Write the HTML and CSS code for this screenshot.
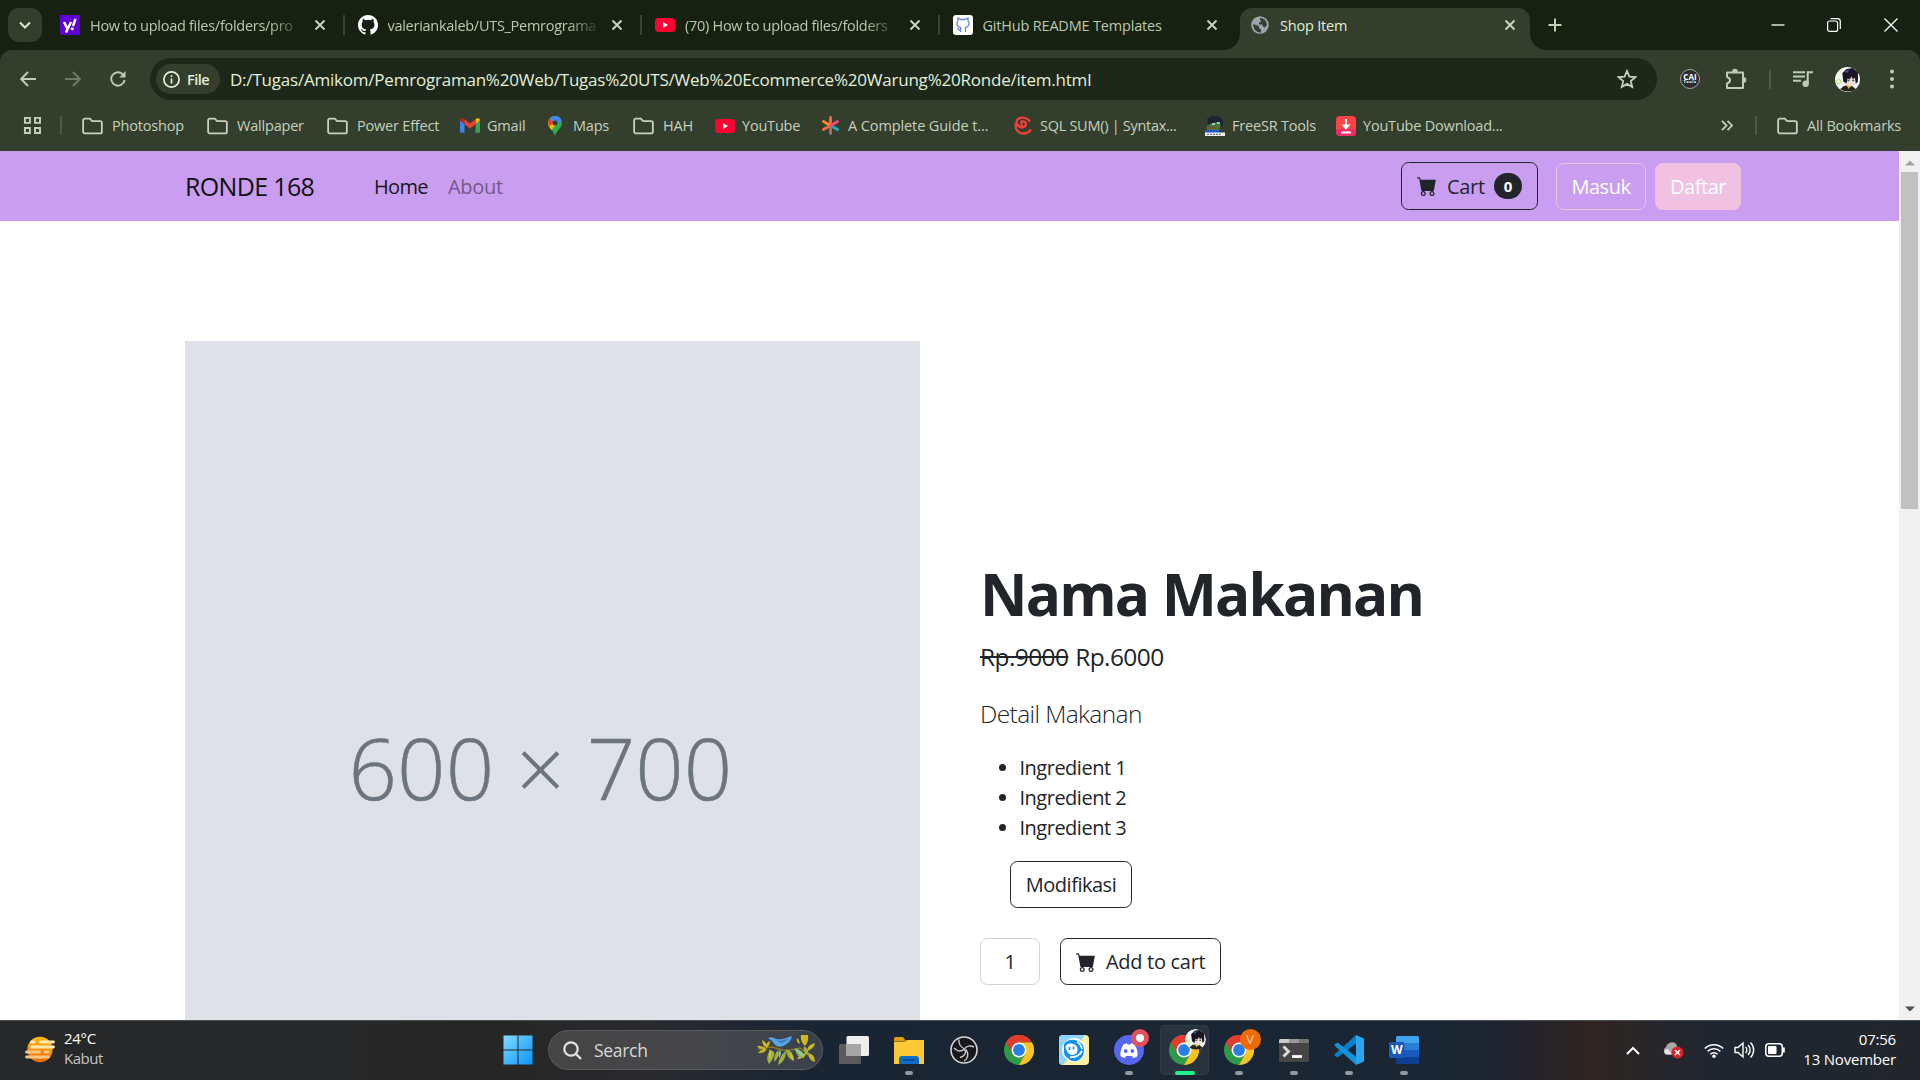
FILE: index.html
```html
<!DOCTYPE html>
<html lang="id">
<head>
<meta charset="utf-8">
<title>Shop Item</title>
<link rel="stylesheet" href="styles.css">
</head>
<body>
<svg class="defs" aria-hidden="true">
  <symbol id="close" viewBox="0 0 12 12"><path d="M1.5 1.5l9 9M10.5 1.5l-9 9" fill="none" stroke="currentColor" stroke-width="1.9"/></symbol>
  <symbol id="folder" viewBox="0 0 22 18"><path d="M1.2 14.8V3a1.8 1.8 0 0 1 1.8-1.8h5.2l2.4 2.6H19A1.8 1.8 0 0 1 20.8 5.600v9.400A1.800 1.800 0 0 1 19 16.800H3A1.800 1.800 0 0 1 1.200 15z" fill="none" stroke="currentColor" stroke-width="1.900"/></symbol>
  <symbol id="youtube" viewBox="0 0 20 14"><rect width="20" height="14" rx="3.500" fill="#ff0033"/><path d="M8 4l5 3-5 3z" fill="#fff"/></symbol>
  <symbol id="cart" viewBox="0 0 16 16"><path d="M0 1.500A.5.5 0 0 1 .5 1H2a.5.5 0 0 1 .485.379L2.890 3H14.500a.5.5 0 0 1 .491.592l-1.500 8A.5.5 0 0 1 13 12H4a.5.5 0 0 1-.491-.408L2.010 3.607 1.610 2H.5a.5.5 0 0 1-.5-.5zM5 12a2 2 0 1 0 0 4 2 2 0 0 0 0-4zm7 0a2 2 0 1 0 0 4 2 2 0 0 0 0-4zm-7 1a1 1 0 1 1 0 2 1 1 0 0 1 0-2zm7 0a1 1 0 1 1 0 2 1 1 0 0 1 0-2z" fill="currentColor"/></symbol>
  <symbol id="chrome" viewBox="0 0 30 30"><circle cx="15" cy="15" r="15" fill="#2b9b47"/><path d="M2 7.500A15 15 0 0 1 28 7.500H15z" fill="#e33b2e"/><path d="M2 7.500A15 15 0 0 1 15 0v15l-6.500 3.700z" fill="#e33b2e"/><path d="M28 7.500A15 15 0 0 1 15 30l6.500-11.300L15 7.500z" fill="#fcc31e"/><circle cx="15" cy="15" r="7.500" fill="#fff"/><circle cx="15" cy="15" r="5.900" fill="#2b7de9"/></symbol>
  <symbol id="avatar" viewBox="0 0 24 24"><circle cx="12" cy="12" r="12" fill="#f4f8f2"/><circle cx="3.500" cy="14" r="2" fill="none" stroke="#b5e388"/><path d="M5 21l4-3h7l4 3a12 12 0 0 1-15 0z" fill="#26231f"/><path d="M11 17l2 4 3-4z" fill="#e6bd37"/><path d="M11 8h9l-1 8-4 3-4-3z" fill="#f6ddd3"/><path d="M8 14L7 6l4-4 6-1 5 4v9l-2 2-1-6-2 2-1-3-2 3-2-1-1 5z" fill="#191527"/><path d="M9 4l5-2-2 4z" fill="#4f3d91"/><path d="M12 13h2M16.500 13h2" stroke="#28695c" stroke-width="1.500"/></symbol>
</svg>

<header class="browser">
  <div class="tabstrip">
    <button class="tab-search"><svg width="12" height="8" viewBox="0 0 12 8"><path d="M1 1.500l5 5 5-5" fill="none" stroke="currentColor" stroke-width="2"/></svg></button>
    <div class="tab">
      <svg class="favicon" viewBox="0 0 20 20"><path fill="#5f01d1" d="M0 0h20v20H0z"/><path d="M4 7l3.500 7M11 7l-5 10.500M15.500 4L13 11" stroke="#fff" stroke-width="2.500" fill="none"/><circle cx="12.300" cy="13.700" r="1.500" fill="#fff"/></svg>
      <span class="tab-title faded">How to upload files/folders/pro</span><svg class="tab-close"><use href="#close"/></svg>
    </div>
    <div class="tab">
      <svg class="favicon" viewBox="0 0 16 16"><path fill="#fff" d="M8 0C3.580 0 0 3.580 0 8c0 3.540 2.290 6.530 5.470 7.590.4.070.55-.17.55-.38v-1.490c-2.010.37-2.530-.49-2.690-.94-.09-.23-.48-.94-.82-1.130-.28-.15-.68-.52-.01-.53.63-.01 1.080.58 1.230.82.72 1.210 1.870.87 2.330.66.070-.52.28-.87.51-1.070-1.780-.2-3.640-.89-3.640-3.950 0-.87.31-1.590.82-2.150-.08-.2-.36-1.020.08-2.120 0 0 .67-.21 2.200.82a7.500 7.500 0 0 1 4 0c1.530-1.040 2.200-.82 2.200-.82.44 1.100.16 1.920.08 2.120.51.56.82 1.270.82 2.150 0 3.070-1.870 3.750-3.650 3.950.29.25.54.73.54 1.480v2.200c0 .21.15.46.55.38A8 8 0 0 0 8 0z"/></svg>
      <span class="tab-title faded">valeriankaleb/UTS_Pemrograma</span><svg class="tab-close"><use href="#close"/></svg>
    </div>
    <div class="tab">
      <svg class="favicon"><use href="#youtube"/></svg>
      <span class="tab-title faded">(70) How to upload files/folders</span><svg class="tab-close"><use href="#close"/></svg>
    </div>
    <div class="tab">
      <svg class="favicon" viewBox="0 0 20 20"><rect width="20" height="20" rx="3" fill="#fff"/><path d="M7.500 17v-4.500C3 11.500 3.500 7 5 6V3l3 1.500h4L15 3v3c1.500 1 2 5.500-2.500 6.500V17M7.500 15C5 15.500 5.500 13.500 4 13" fill="none" stroke="#5c83e6" stroke-width="1.300"/></svg>
      <span class="tab-title">GitHub README Templates</span><svg class="tab-close"><use href="#close"/></svg>
    </div>
    <div class="tab active">
      <svg class="favicon globe" viewBox="0 0 18 18"><circle cx="9" cy="9" r="8.800" fill="#9da2ad"/><path d="M2 8l4.500 1.500q2 .5 1.500 2.500l2 1.500v3Q3 17 2 8zM9 2q6 0 7 7l-2.500 2.500-2-1.500V8.500H8V6.500l2.500-1L9 4z" fill="#333e2d"/></svg>
      <span class="tab-title">Shop Item</span><svg class="tab-close"><use href="#close"/></svg>
    </div>
    <svg class="new-tab" viewBox="0 0 14 14"><path d="M7 .5v13M.5 7h13" stroke="currentColor" stroke-width="2"/></svg>
    <div class="window-buttons">
      <svg width="14" height="14" viewBox="0 0 14 14"><path d="M.5 7h13" stroke="#fff" stroke-width="1.300"/></svg>
      <svg width="14" height="14" viewBox="0 0 14 14"><rect x=".6" y="3" width="10" height="10.400" rx="2" fill="none" stroke="#fff" stroke-width="1.200"/><path d="M3.500 .7h7a2.800 2.800 0 0 1 2.800 2.800V11" fill="none" stroke="#fff" stroke-width="1.200"/></svg>
      <svg width="14" height="14" viewBox="0 0 14 14"><path d="M.5 .5l13 13M13.500 .5l-13 13" stroke="#fff" stroke-width="1.300"/></svg>
    </div>
  </div>

  <div class="toolbar">
    <div class="nav-icons">
      <svg viewBox="0 0 16 16"><path d="M8 1L1.200 8 8 15M1.500 8H16" fill="none" stroke="currentColor" stroke-width="1.900"/></svg>
      <svg class="dim" viewBox="0 0 16 16"><path d="M8 1l6.800 7L8 15M14.500 8H0" fill="none" stroke="currentColor" stroke-width="1.900"/></svg>
      <svg viewBox="0 0 16 16"><path d="M14.600 9A6.700 6.700 0 1 1 13 3.500l1.500 2" fill="none" stroke="currentColor" stroke-width="1.900"/><path d="M15.500 0v6.500H9.300z" fill="currentColor"/></svg>
    </div>
    <div class="omnibox">
      <span class="chip"><svg width="17" height="17" viewBox="0 0 17 17"><circle cx="8.500" cy="8.500" r="7.600" fill="none" stroke="currentColor" stroke-width="1.700"/><path d="M8.500 7.500v5M8.500 4.300v1.800" stroke="currentColor" stroke-width="1.700"/></svg>File</span>
      <span class="url">D:/Tugas/Amikom/Pemrograman%20Web/Tugas%20UTS/Web%20Ecommerce%20Warung%20Ronde/item.html</span>
      <svg class="star" viewBox="0 0 20 20"><path d="M10 2l2.400 5.600 6 .5-4.600 4 1.400 5.900L10 14.900 4.800 18l1.400-5.900-4.600-4 6-.5z" fill="none" stroke="currentColor" stroke-width="1.800"/></svg>
    </div>
    <div class="extensions">
      <span class="cai">CAI<small>Tools</small></span>
      <svg class="puzzle" width="22" height="22" viewBox="0 0 22 22"><path d="M2 4.500h16V20H2v-4.500c4-1.500 4-5 0-6.500z" fill="none" stroke="currentColor" stroke-width="2" stroke-linejoin="round"/><path d="M7 4a2.800 3.200 0 0 1 5.800 0zM18.500 9a2.800 2.900 0 0 1 0 5.800z" fill="currentColor"/></svg>
      <i class="sep"></i>
      <svg width="20" height="18" viewBox="0 0 20 18"><path d="M0 2.200h12M0 6.500h12M0 10.800h8M14.700 13V2.200H20" fill="none" stroke="currentColor" stroke-width="2.100"/><circle cx="12.700" cy="13.700" r="3.200" fill="currentColor"/></svg>
      <svg width="25" height="25"><use href="#avatar"/></svg>
      <svg class="menu" width="4" height="20" viewBox="0 0 4 20"><g fill="currentColor"><circle cx="2" cy="2.500" r="2"/><circle cx="2" cy="10" r="2"/><circle cx="2" cy="17.500" r="2"/></g></svg>
    </div>
  </div>

  <div class="bookmarks">
    <svg width="19" height="19" viewBox="0 0 19 19"><path d="M1.900 1.900h5v5h-5zM12 1.900h5v5h-5zM1.900 12h5v5h-5zM12 12h5v5h-5z" fill="none" stroke="currentColor" stroke-width="1.900"/></svg>
    <i class="sep"></i>
    <span class="bm"><svg class="fold"><use href="#folder"/></svg>Photoshop</span>
    <span class="bm"><svg class="fold"><use href="#folder"/></svg>Wallpaper</span>
    <span class="bm"><svg class="fold"><use href="#folder"/></svg>Power Effect</span>
    <span class="bm tight"><svg width="20" height="15" viewBox="0 0 20 15"><path d="M0 3v10.500c0 .8.500 1.300 1.300 1.300H4.500V5z" fill="#3f83f0"/><path d="M20 3v10.500c0 .8-.5 1.300-1.300 1.300h-3.200V5z" fill="#34a650"/><path d="M0 2.500l4.500 3.300v-4.500C2.500-.5 0 .3 0 2.500z" fill="#c5221f"/><path d="M20 2.500l-4.500 3.300v-4.500C17.500-.5 20 .3 20 2.500z" fill="#fbbc04"/><path d="M4.500 1.300L10 5.500l5.500-4.200v5L10 10.500 4.500 6.300z" fill="#ea4335"/></svg>Gmail</span>
    <span class="bm maps"><svg width="14" height="20" viewBox="0 0 14 20"><path d="M7 0a7 7 0 0 1 7 7c0 5-5 6.500-7 13-1.500-6-7-8-7-13a7 7 0 0 1 7-7z" fill="#34a853"/><path d="M0 7c0 3 2 5 3.500 7L9.500 7 3 2A7 7 0 0 0 0 7z" fill="#fbbc04"/><path d="M1.600 2.600A7 7 0 0 1 13.500 4.300L8.500 9.500 4 5.500z" fill="#4285f4"/><path d="M0 7c0-2 .7-3.400 1.600-4.400L6 6.300 1.200 10.500z" fill="#ea4335"/><circle cx="7" cy="7" r="2.500" fill="#333e2d"/></svg>Maps</span>
    <span class="bm"><svg class="fold"><use href="#folder"/></svg>HAH</span>
    <span class="bm tight"><svg width="20" height="14"><use href="#youtube"/></svg>YouTube</span>
    <span class="bm guide"><svg width="19" height="19" viewBox="0 0 19 19"><g stroke-width="2.900" stroke-linecap="round"><path d="M9.500 9.500V1.500" stroke="#ff6242"/><path d="M9.500 9.500l-7-4" stroke="#ff8a1e"/><path d="M9.500 9.500l-7 4" stroke="#f56f35"/><path d="M9.500 9.500v8" stroke="#a56c7d"/><path d="M9.500 9.500l7 4" stroke="#2ea8bd"/><path d="M9.500 9.500l7-4" stroke="#ef4b78"/></g></svg>A Complete Guide t...</span>
    <span class="bm tight sql"><svg width="19" height="19" viewBox="0 0 19 19"><path d="M7.500 11.500V5.500q4.500-.5 4.500 2.500t-5 3.500C2.500 10 1 5 4.500 2.800 9 0 14 2.500 16 5.500M2 7c-1.500 5.500 2 10.500 7.500 10.500 4 0 6-2 7.500-4" fill="none" stroke="#f0403a" stroke-width="2.300"/></svg>SQL SUM() | Syntax...</span>
    <span class="bm tight"><svg width="20" height="20" viewBox="0 0 20 20"><path d="M2 3l4-3 9 1 3 4-1 6H4z" fill="#182535"/><path d="M5 8l7-2 4 3-2 5H2v-4z" fill="#3b7c3c"/><path d="M7 8h3M12 7h3" stroke="#d9e4d2" stroke-width="1.500"/><path d="M1 12h12" stroke="#9c3d22" stroke-width="1.200"/><path d="M0 14h14v3H0z" fill="#2056d8"/><path d="M0 16.500h20V20H0z" fill="#f2f2f2"/><path d="M2 18.300h15" stroke="#555" stroke-dasharray="2 1"/></svg>FreeSR Tools</span>
    <span class="bm tight"><svg width="20" height="20" viewBox="0 0 20 20"><rect width="20" height="20" rx="4" fill="#fb4343"/><path d="M0 13h20v3a4 4 0 0 1-4 4H4a4 4 0 0 1-4-4z" fill="#f12a66"/><path d="M10 3v7M5 16.500h10" stroke="#fff" stroke-width="2"/><path d="M5.500 8.500h9L10 14z" fill="#fff"/></svg>YouTube Download...</span>
    <svg class="more" viewBox="0 0 12 11"><path d="M1 .8l4.500 4.700L1 10.200M6.500 .8L11 5.500l-4.500 4.700" fill="none" stroke="currentColor" stroke-width="1.800"/></svg>
    <i class="sep"></i>
    <span class="bm"><svg class="fold"><use href="#folder"/></svg>All Bookmarks</span>
  </div>
</header>

<div class="viewport">
  <main class="page">
    <nav class="navbar">
      <span class="brand">RONDE 168</span>
      <a class="nav-home">Home</a>
      <a class="nav-about">About</a>
      <button class="btn cart-btn"><svg class="cart"><use href="#cart"/></svg><span>Cart</span><b class="badge">0</b></button>
      <button class="btn btn-outline-pink">Masuk</button>
      <button class="btn btn-pink">Daftar</button>
    </nav>
    <section class="product">
      <div class="placeholder"><span>600 × 700</span></div>
      <div class="details">
        <h1>Nama Makanan</h1>
        <p class="price"><s>Rp.9000</s> <span>Rp.6000</span></p>
        <p class="lead">Detail Makanan</p>
        <ul><li>Ingredient 1</li><li>Ingredient 2</li><li>Ingredient 3</li></ul>
        <button class="btn modify">Modifikasi</button>
        <div class="buy">
          <span class="qty">1</span>
          <button class="btn add"><svg class="cart"><use href="#cart"/></svg><span>Add to cart</span></button>
        </div>
      </div>
    </section>
  </main>
  <div class="scrollbar">
    <svg viewBox="0 0 10 6"><path d="M0 5.500L5 .5l5 5z" fill="#a3a3a3"/></svg>
    <i class="thumb"></i>
    <svg viewBox="0 0 10 6"><path d="M0 .5l5 5 5-5z" fill="#505050"/></svg>
  </div>
</div>

<footer class="taskbar">
  <div class="weather">
    <svg width="30" height="27" viewBox="0 0 30 27"><defs><linearGradient id="sun" x2="0" y2="1"><stop stop-color="#fdbb12"/><stop offset="1" stop-color="#ef650e"/></linearGradient></defs><circle cx="15" cy="13.500" r="12.700" fill="url(#sun)"/><g stroke="#ffe9b0" stroke-width="2.800" stroke-linecap="round"><path d="M6.500 6H9M15.500 6h13M6.500 11h22"/><path stroke="#f5c87d" d="M1.500 16h13M20 16h3.500M1.500 21h22"/></g></svg>
    <div class="weather-text"><div>24°C</div><div class="muted">Kabut</div></div>
  </div>
  <div class="apps">
    <svg class="start" width="30" height="30" viewBox="0 0 30 30"><defs><linearGradient id="win" x2="1" y2="1"><stop stop-color="#7fdcff"/><stop offset="1" stop-color="#0a93fb"/></linearGradient></defs><path d="M.5.5h14v14H.5zM15.500.5h14v14h-14zM.5 15.500h14v14H.5zM15.500 15.500h14v14h-14z" fill="url(#win)"/></svg>
    <div class="search">
      <svg width="19" height="19" viewBox="0 0 19 19"><circle cx="8" cy="8" r="6.700" fill="none" stroke="#e4e4e6" stroke-width="2.200"/><path d="M12.500 12.500L18 18" stroke="#e4e4e6" stroke-width="2.400"/></svg>
      <span>Search</span>
      <svg class="bird" width="60" height="30" viewBox="0 0 60 30"><path d="M2 14l14-2 14 4 14-3 10 8" fill="none" stroke="#8a7a2a" stroke-width="1.500"/><g fill="#cdb81f"><path d="M1 11q5-1 9 3-6 1-9-3zM6 5q5 2 5 8-5-2-5-8zM14 6q0 5-4 7-1-5 4-7zM2 18q4-5 9-4-3 5-9 4zM45 0h7q1 7-3 11-5-4-4-11zM44 9q-1-5-3-6-1 5 3 6zM59 8q-1 6-8 8 0-6 8-8zM52 18q7 1 7 9-6-1-7-9zM41 24q3-6 10-6-3 6-10 6z"/></g><g fill="#9fb043"><path d="M14 15q6 1 4 6t-5 8q-4-6 1-14zM22 15q3 6-4 12 0-8 4-12zM30 16q0 10-8 14 1-9 8-14zM30 14q8 2 8 12-8-3-8-12zM39 13q9 2 9 10-8 0-9-10zM48 11q6 4 4 9-6-3-4-9z"/></g><path d="M38 14q9 2 10 9-5-4-10-9zM24 14q2 6-1 9-1-5 1-9z" fill="#83d0be"/><path d="M14 14q2 5 0 10-2-5 0-10zM34 17q4 5 3 9-3-4-3-9z" fill="#d8c339"/><path d="M12 3q4-2 8 1 6 1 10-1l6-2q-1 6-7 9-6 4-11-1-2-4-6-6z" fill="#54a7e4"/><path d="M20 5q6 2 12-2-2 5-8 5z" fill="#3a7fc0"/></svg>
    </div>
    <div class="app"><svg width="30" height="28" viewBox="0 0 30 28"><rect y="8" width="22" height="20" rx="1.500" fill="#5c5c5c"/><rect x="7.500" width="22.500" height="20" rx="1.500" fill="#eee"/><path d="M7.500 8H22v12H7.500z" fill="#a6a6a6"/></svg></div>
    <div class="app run"><svg width="30" height="27" viewBox="0 0 30 27"><path d="M0 1.500Q0 0 1.500 0H9l3 4H0z" fill="#e29a08"/><path d="M0 4.500h11L13 3h17v24H0z" fill="#fdca37"/><path d="M5 27v-5q0-3 3-3h14q3 0 3 3v5z" fill="#0f6cc4"/><path d="M9 23h12" stroke="#06478c" stroke-width="1.500"/></svg></div>
    <div class="app"><svg width="28" height="28" viewBox="0 0 28 28"><circle cx="14" cy="14" r="13" fill="#18181a" stroke="#d8d8da" stroke-width="1.600"/><path d="M9 3.500c-1 5 2 7.500 5.500 9.500 2 4 .5 7-4.500 8.500M24 11c-4-2-8-1-9.500 2C11 16 7 15 4 12M14 25c4-2 5-7 2-11.500" fill="none" stroke="#c9c9cc" stroke-width="1.400"/></svg></div>
    <div class="app"><svg width="30" height="30"><use href="#chrome"/></svg></div>
    <div class="app"><svg width="30" height="30" viewBox="0 0 30 30"><rect width="30" height="30" rx="4" fill="#fdf0a0"/><path d="M4 0h22L4 30a4 4 0 0 1-4-4V4a4 4 0 0 1 4-4z" fill="#8ed5fb"/><circle cx="15" cy="15" r="12" fill="#fff"/><path d="M5 9q4-5 11-4 9 2 9 10t-7 11q-6 1-9-3-3-1-4-5z" fill="#1590ee"/><path d="M6.500 12q1-4 6-3.500 6 1 6 6t-5.500 5.500q-5-1-6.500-8z" fill="#fff"/><path d="M10.500 12v3M14.500 11.500v3" stroke="#1590ee" stroke-width="1.700"/><path d="M11 22q8 1 12-6M18 7q4 2 5 7" fill="none" stroke="#fff" stroke-width="1.700"/></svg></div>
    <div class="app run"><svg width="30" height="30" viewBox="0 0 30 30"><circle cx="15" cy="15" r="15" fill="#5765ef"/><path d="M10 9l3-.7.7 1.200h2.600L17 8.300l3 .7c3 4 4 8 3.500 12-2 1.500-3.500 1.800-4.500 2l-1-2h-6l-1 2c-1-.2-2.500-.5-4.500-2C6 17 7 13 10 9z" fill="#fff"/><ellipse cx="11.700" cy="16" rx="1.800" ry="2" fill="#5765ef"/><ellipse cx="18.300" cy="16" rx="1.800" ry="2" fill="#5765ef"/></svg><i class="badge-dot rec"></i></div>
    <div class="app run current"><svg width="30" height="30"><use href="#chrome"/></svg><svg class="badge-dot"><use href="#avatar"/></svg></div>
    <div class="app run"><svg width="30" height="30"><use href="#chrome"/></svg><i class="badge-dot orange">V</i></div>
    <div class="app run"><svg width="30" height="23" viewBox="0 0 30 23"><rect width="30" height="23" rx="1.500" fill="#464646"/><path d="M0 4V1.500Q0 0 1.500 0H10v4z" fill="#ccc"/><path d="M10 0h10v4H10z" fill="#999"/><path d="M20 0h8.500Q30 0 30 1.500V4H20z" fill="#777"/><path d="M4.500 7.500l5 5-5 5" fill="none" stroke="#ddd" stroke-width="2.800"/><path d="M13 17.500h10" stroke="#fff" stroke-width="2.800"/></svg></div>
    <div class="app run"><svg width="30" height="30" viewBox="0 0 30 30"><path d="M22 0l8 3.500v23L22 30z" fill="#2aa5ee"/><path d="M22 0v8.500L3.500 22.500 0 20z" fill="#0a80cd"/><path d="M22 30v-8.500L3.500 7.500 0 10z" fill="#1292dd"/></svg></div>
    <div class="app run"><svg width="30" height="28" viewBox="0 0 30 28"><path d="M7 1.500Q7 0 8.500 0h20Q30 0 30 1.500V7H7z" fill="#41a5ee"/><path d="M7 7h23v7H7z" fill="#2b7cd3"/><path d="M7 14h23v7H7z" fill="#185abd"/><path d="M7 21h23v5.500q0 1.500-1.500 1.500h-20Q7 28 7 26.500z" fill="#103f91"/><rect y="6" width="15.500" height="16" rx="1.500" fill="#1b58b7"/><text x="7.700" y="18.200" text-anchor="middle" font-family="Open Sans" font-weight="700" font-size="12" fill="#fff">W</text></svg></div>
  </div>
  <div class="tray">
    <svg width="14" height="9" viewBox="0 0 14 9"><path d="M1 8l6-6 6 6" fill="none" stroke="#fff" stroke-width="2"/></svg>
    <svg class="cloud" width="21" height="18" viewBox="0 0 21 18"><path d="M4 13.500a4 4 0 0 1-1-7.500C5 0 13 0 14 5l2 8.500z" fill="#a8a8a8"/><path d="M3 13.500C0 12 1 8 5 8l4 5.500z" fill="#e5e5e5"/><circle cx="14.500" cy="11.500" r="6" fill="#d8202b"/><path d="M12 9l5 5M17 9l-5 5" stroke="#fff" stroke-width="1.600"/></svg>
    <svg class="wifi" width="20" height="15" viewBox="0 0 20 15"><g fill="none" stroke="#fff" stroke-width="1.500"><path d="M.8 5.500a13 13 0 0 1 18.400 0M3.600 8.400a9 9 0 0 1 12.800 0M6.400 11.200a5 5 0 0 1 7.200 0"/></g><circle cx="10" cy="13.200" r="1.800" fill="#fff"/></svg>
    <svg class="sound" width="21" height="18" viewBox="0 0 21 18"><g fill="none" stroke="#fff" stroke-width="1.400"><path d="M1 6.500h3l5-4.500v14l-5-4.500H1zM11.500 6a4 4 0 0 1 0 6M14 4a7 7 0 0 1 0 10M16.500 1.500a10.500 10.500 0 0 1 0 15"/></g></svg>
    <svg class="battery" width="20" height="14" viewBox="0 0 20 14"><rect x=".8" y=".8" width="16.500" height="12.400" rx="3" fill="none" stroke="#fff" stroke-width="1.500"/><rect x="3" y="3" width="8.500" height="8" rx="1" fill="#fff"/><path d="M18.800 4.500v5" stroke="#fff" stroke-width="2"/></svg>
    <div class="clock"><div>07:56</div><div>13 November</div></div>
  </div>
</footer>
</body>
</html>
```
FILE: styles.css
```css
* { box-sizing: border-box; }
body { margin: 0; width: 1920px; height: 1080px; overflow: hidden; display: flex; flex-direction: column; background: #fff; font-family: "Open Sans", "Noto Sans", sans-serif; font-size: 15px; letter-spacing: -0.3px; }
svg { display: block; flex: none; }
button { font: inherit; letter-spacing: inherit; border: 0; background: none; padding: 0; }
.defs { display: none; }

/* browser chrome */
.browser { height: 151px; flex: none; background: #172112; color: #c0cfb4; }
.tabstrip { height: 50px; display: flex; align-items: flex-start; }
.tab-search { width: 34px; height: 34px; margin: 8px 4px 0 8px; border-radius: 11px; background: #333e2d; color: #dbe8d0; display: flex; align-items: center; justify-content: center; }
.tab { position: relative; width: 297.500px; height: 42px; margin-top: 8px; padding: 0 18px 8px 14px; display: flex; align-items: center; font-size: 14.500px; letter-spacing: -0.19px; color: #b9c9ad; }
.tab:nth-of-type(n+2)::before { content: ""; position: absolute; left: -1px; top: 7px; width: 2px; height: 20px; background: #384431; }
.favicon { width: 20px; height: 20px; margin-right: 10px; }
.tab-title { white-space: nowrap; }
.faded { -webkit-mask-image: linear-gradient(90deg, #000 180px, transparent 213px); mask-image: linear-gradient(90deg, #000 180px, transparent 213px); letter-spacing: -0.28px; }
.tab-close { width: 12px; height: 12px; margin-left: auto; color: #c9d7be; }
.tab.active { margin-left: 4px; width: 290px; padding-left: 11px; padding-right: 14px; background: #333e2d; border-radius: 12px 12px 0 0; color: #e0eed6; }
.tab.active::before { left: -16px; top: auto; bottom: 0; width: 16px; height: 16px; background: radial-gradient(circle at 0 0, transparent 15.500px, #333e2d 16px); }
.tab.active::after { content: ""; position: absolute; right: -16px; bottom: 0; width: 16px; height: 16px; background: radial-gradient(circle at 100% 0, transparent 15.500px, #333e2d 16px); }
.globe { width: 18px; height: 18px; margin-right: 11px; }
.new-tab { width: 14px; height: 14px; margin: 18px 0 0 18px; color: #c0d0b4; }
.window-buttons { margin: 18px 22px 0 auto; display: flex; gap: 43px; }
.window-buttons svg:nth-child(2) { margin-left: -1px; }
.toolbar { height: 58px; background: #333e2d; border-radius: 12px 12px 0 0; display: flex; align-items: center; padding: 0 26px 0 20px; color: #bccdb0; }
.nav-icons { width: 130px; display: flex; gap: 29px; }
.nav-icons svg { width: 16px; height: 16px; }
.dim { color: #6f7b67; }
.omnibox { width: 1507px; height: 42px; border-radius: 21px; background: #1d281a; display: flex; align-items: center; padding: 0 20px 0 6px; color: #e3efd9; }
.chip { width: 64px; height: 30px; border-radius: 15px; background: #333e2d; display: flex; align-items: center; gap: 7px; padding-left: 7px; font-size: 14.500px; font-weight: 600; letter-spacing: -0.5px; }
.url { margin-left: 10px; font-size: 17px; letter-spacing: -0.215px; }
.star { width: 20px; height: 20px; margin-left: auto; color: #c6d3bc; }
.extensions { flex: 1; margin-left: 23px; display: flex; align-items: center; gap: 22px; }
.extensions .puzzle { margin-left: 3px; }
.extensions .menu { margin-left: 8px; }
.cai { width: 20px; height: 20px; border-radius: 50%; border: 1px solid #a5a5a5; background: #2c2b30; color: #fff; font-size: 8px; font-weight: 700; line-height: 7px; padding-top: 3px; text-align: center; letter-spacing: 0; }
.cai small { display: block; font-size: 4px; line-height: 4px; letter-spacing: .5px; }
.sep { width: 2px; height: 19px; background: #4d5945; flex: none; }
.bookmarks { height: 43px; background: #333e2d; display: grid; grid-template-columns: 37px 22px 125px 120px 133px 88px 85px 82px 106px 193px 191px 131px 1fr 28px 22px 125px; align-items: center; padding: 0 18px 8px 23px; color: #c6d2bd; font-size: 14.500px; letter-spacing: -0.2px; }
.bm { display: flex; align-items: center; gap: 9px; white-space: nowrap; }
.bm.tight { gap: 7px; }
.bm.maps { gap: 11px; }
.bm.guide { gap: 8px; letter-spacing: -0.1px; }
.bm.sql { letter-spacing: -0.28px; }
.fold { width: 21px; height: 18px; }
.more { width: 12px; height: 11px; justify-self: end; margin-right: 22px; }

/* shop page */
.viewport { flex: 1; min-height: 0; display: flex; color: #212529; font-size: 20px; }
.page { width: 1899px; overflow: hidden; }
.navbar { height: 70px; background: #c99ef0; padding: 0 158px 0 185px; display: flex; align-items: center; }
.brand { width: 189px; font-size: 25px; letter-spacing: -0.65px; color: #111; }
.nav-home { width: 74px; color: #191320; letter-spacing: -0.65px; }
.nav-about { color: #725a88; }
.btn { height: 47px; border-radius: 7.500px; border: 1px solid #212529; color: #212529; display: flex; align-items: center; }
.cart { width: 20px; height: 20px; }
.cart-btn { height: 48px; margin-left: auto; width: 137px; padding-left: 15px; gap: 10px; }
.badge { width: 28px; height: 26px; margin-left: -1px; border-radius: 13px; background: #212529; color: #fff; font-size: 15px; display: flex; align-items: center; justify-content: center; }
.btn-outline-pink, .btn-pink { justify-content: center; border-color: #f0c1e1; color: #fff; letter-spacing: -0.45px; }
.btn-outline-pink { margin-left: 18px; width: 90px; }
.btn-pink { margin-left: 9px; width: 86px; background: #f0c1e1; }
.product { padding: 120px 158px 0 185px; display: grid; grid-template-columns: 735px 1fr; gap: 60px; }
.placeholder { height: 857px; padding-bottom: 5px; background: #dee2e6; color: #6c757d; display: flex; align-items: center; justify-content: center; font-size: 85px; font-weight: 300; letter-spacing: 0; -webkit-text-stroke: .5px #6c757d; }
.placeholder span { margin-right: 24px; white-space: nowrap; }
.details { padding-top: 216px; }
h1 { margin: 0 0 8.500px; font-size: 58.500px; line-height: 72px; font-weight: 700; letter-spacing: -1.830px; }
p { margin: 0; font-size: 24.500px; line-height: 37px; letter-spacing: -0.6px; }
.price { margin-bottom: 20px; }
.price span { margin-left: 1px; }
.lead { font-weight: 300; margin-bottom: 21px; }
ul { margin: 0 0 18.500px; padding-left: 39.500px; line-height: 30px; letter-spacing: -0.5px; }
.modify { width: 122px; margin-left: 30px; justify-content: center; letter-spacing: -0.48px; }
.buy { display: flex; gap: 20px; margin-top: 30px; }
.qty { width: 60px; height: 47px; border: 1px solid #ced4da; border-radius: 7.500px; display: flex; align-items: center; justify-content: center; }
.add { width: 161px; padding-left: 15px; gap: 10px; }
.scrollbar { width: 21px; background: #f1f1f1; display: flex; flex-direction: column; align-items: center; padding: 9px 0 8px; }
.scrollbar svg { width: 10px; height: 6px; }
.thumb { width: 17px; height: 337px; margin: 6px 0 auto; background: #c1c1c1; }

/* taskbar */
.taskbar { height: 60px; flex: none; border-top: 1px solid #454d53; background: linear-gradient(90deg, #262729 0, #26282a 220px, #262626 500px, #292a2e 650px, #1a2533 800px, #1a2633 1450px, #1e2430 1500px, #30241f 1590px, #26262c 1660px, #1e2631 1720px, #22262b 1920px); display: flex; align-items: center; color: #fff; line-height: 20px; }
.weather { width: 502.500px; padding-left: 25px; display: flex; align-items: center; gap: 9px; margin-top: -2px; }
.weather-text { padding-bottom: 3px; }
.muted { color: #c5c5c5; letter-spacing: -0.45px; }
.apps { display: flex; align-items: center; margin-top: -1px; }
.start { margin-right: 15.500px; }
.search { width: 275px; height: 40px; margin-right: 3.500px; border: 1px solid #5b5c60; border-radius: 20px; background: linear-gradient(90deg, #454545, #45464a 55%, #3a414c); display: flex; align-items: center; padding: 0 6px 0 14px; font-size: 17.500px; color: #d8d8d8; }
.search span { margin-left: 12px; }
.bird { margin-left: auto; }
.app { position: relative; width: 49px; height: 50px; margin: 0 3px; border-radius: 5px; display: flex; align-items: center; justify-content: center; }
.run::after { content: ""; position: absolute; left: 20.500px; bottom: 0; width: 8px; height: 4px; border-radius: 2px; background: #9298a0; }
.current { background: #28333f; box-shadow: inset 0 0 0 1px #303b47; }
.current::after { left: 15px; width: 20px; background: #22f28a; }
.badge-dot { position: absolute; left: 25px; top: 4px; width: 21px; height: 21px; border-radius: 50%; }
.rec { background: #fff; border: 5px solid #e55058; left: 26px; width: 18px; height: 18px; }
.orange { background: #ed6b06; color: #f7cfae; font: 13px/20px "Open Sans", sans-serif; text-align: center; }
.tray { flex: 1; display: flex; align-items: center; padding-right: 24px; justify-content: flex-end; margin-top: -1px; }
.cloud { margin-left: 23px; }
.wifi { margin-left: 20px; }
.sound { margin-left: 10px; }
.battery { margin-left: 10px; }
.clock { width: 111px; text-align: right; padding-bottom: 3px; letter-spacing: -0.2px; }
```
